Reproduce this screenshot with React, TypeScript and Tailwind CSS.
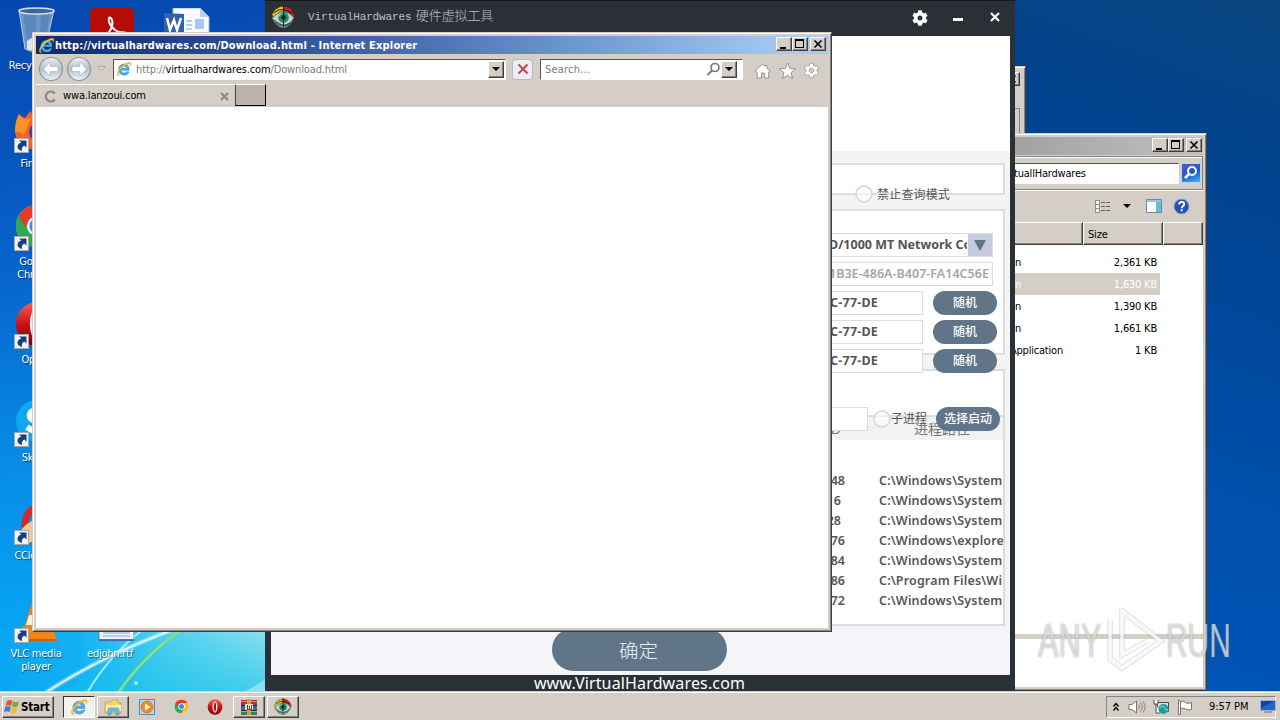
import type { ReactNode } from "react";
import clsx from "clsx";
import { FaCog } from "react-icons/fa";

// Shared classes
const UI_FONT = "font-['DejaVu_Sans_Condensed','DejaVu_Sans','Noto_Sans_CJK_SC',sans-serif] [font-stretch:condensed]";
const APP_FONT = "font-['Noto_Sans','Noto_Sans_CJK_SC',sans-serif]";
const RAISED = "border border-t-white border-l-white border-b-[#404040] border-r-[#404040] bg-[#d4cec6] shadow-[inset_-1px_-1px_0_#87827c]";
const SUNKEN = "border border-t-[#55524e] border-l-[#55524e] border-b-white border-r-white";
const FRAME = "border border-t-[#d4cec6] border-l-[#d4cec6] border-b-[#404040] border-r-[#404040] bg-[#d4cec6] shadow-[inset_1px_1px_0_#fff,inset_-1px_-1px_0_#87827c]";


/* ---------- Icons ---------- */

function IeIcon({ size }: { size: number }) {
    return (
        <svg width={size} height={size} viewBox="0 0 16 16" className="shrink-0">
            <path d="M13.2 9.2H5.2C5.4 11 6.6 12 8.3 12c1.200 0 2-.5 2.500-1.200h2.300C12.300 13 10.500 14.200 8.300 14.200 5 14.200 2.700 11.800 2.700 8.500S5 3 8.200 3s5.200 2.400 5 6.200zM5.300 7.300h5.300C10.400 6 9.500 5.200 8 5.200S5.600 6 5.300 7.300z" fill="#4db1f0" stroke="#1f77c4" strokeWidth=".5" />
            <path d="M2.500 14.800C-.5 14 2 8.500 6 5c4-3.600 8.700-5 9-2.400.1.800-.2 1.700-.7 2.600.2-1.800-.6-2.600-2.500-2C8 4.300 3.500 9 2.600 12c-.4 1.400 0 2.300 1.500 2.100-.500.5-1 .7-1.600.7z" fill="#f5c928" stroke="#cf9712" strokeWidth=".3" />
        </svg>
    );
}

function ChromeIcon({ size }: { size: number }) {
    return (
        <svg width={size} height={size} viewBox="0 0 48 48" className="shrink-0">
            <circle cx="24" cy="24" r="22" fill="#fbc116" />
            <path d="M5 13A22 22 0 0 0 22 46L33 29 24 24z" fill="#2da94f" />
            <path d="M5 13A22 22 0 0 1 43 13H24v11H11z" fill="#e33b2e" />
            <circle cx="24" cy="24" r="10.500" fill="#fff" />
            <circle cx="24" cy="24" r="8" fill="#4286f5" />
        </svg>
    );
}

function OperaIcon({ size }: { size: number }) {
    return (
        <svg width={size} height={size} viewBox="0 0 48 48" className="shrink-0">
            <defs>
                <linearGradient id="opera" x2="0" y2="1">
                    <stop stopColor="#f0635a" />
                    <stop offset=".5" stopColor="#cc1016" />
                    <stop offset="1" stopColor="#7e0007" />
                </linearGradient>
            </defs>
            <ellipse cx="24" cy="24" rx="22" ry="23" fill="url(#opera)" />
            <ellipse cx="24" cy="24" rx="7.500" ry="17" fill="#f5eded" />
            <ellipse cx="24" cy="24" rx="3" ry="14" fill="#a20b10" />
        </svg>
    );
}

function EyeIcon({ size }: { size: number }) {
    return (
        <svg width={size} height={size} viewBox="0 0 26 26" className="shrink-0">
            <path d="M1 10Q4 2 13 1v7Q6 9 2 14z" fill="#e0c02c" stroke="#222" strokeWidth=".6" />
            <path d="M13 1q10 1 12 11l-3 1Q20 8 13 8z" fill="#d02020" stroke="#3c1010" strokeWidth=".6" />
            <path d="M1 14Q7 7 13 7t11 6q-3 10-11 11Q5 23 1 14z" fill="#c8d3d0" stroke="#20302c" strokeWidth=".7" />
            <path d="M2 15q6 5 11 6 7-1 11-7M4 18q5 4 9 4 5 0 8-4" fill="none" stroke="#2e5148" strokeWidth="1.100" />
            <circle cx="13" cy="13" r="5.500" fill="#1f8f6b" />
            <circle cx="13" cy="13" r="2.500" fill="#0c2a25" />
            <path d="M3 8q9-7 20 1M13 1v22" fill="none" stroke="#1f1c12" />
            <path d="M8 12q1-3 4-3" fill="none" stroke="#a6e3cf" />
        </svg>
    );
}

function WinRarIcon() {
    return (
        <svg width="18" height="18" viewBox="0 0 18 18" shapeRendering="crispEdges">
            <path d="M1 2h16v5H1z" fill="#b92c3d" />
            <path d="M1 7h16v5H1z" fill="#3a62b5" />
            <path d="M1 12h16v5H1z" fill="#368645" />
            <path d="M1 3h16M1 13h16" stroke="#d98c88" />
            <path d="M1 7h16M1 12h16" stroke="#2a2940" />
            <path d="M7 1h4v16H7z" fill="#c9a54a" />
            <path d="M5 6h8v6H5z" fill="#e9e4d4" />
            <path d="M7 7v4h4V7M9 8v3" fill="none" stroke="#514320" />
        </svg>
    );
}

function FolderIcon() {
    return (
        <svg width="18" height="18" viewBox="0 0 18 18">
            <path d="M1 4h6l1-2h6v3h3v10H1z" fill="#f2d36c" stroke="#c49b34" strokeWidth=".7" />
            <path d="M2 7h15v6H2z" fill="#fbeeb0" />
            <path d="M4 17v-5q0-2 2-2h7q2 0 2 2v5h-3v-4H7v4z" fill="#6bc0e8" stroke="#3a8bba" strokeWidth=".6" />
        </svg>
    );
}

function MediaIcon() {
    return (
        <svg width="16" height="16" viewBox="0 0 16 16">
            <rect x=".5" y=".5" width="15" height="15" fill="#b7d7ec" stroke="#4a8fbf" />
            <circle cx="8" cy="8" r="6" fill="#f28a1a" stroke="#d26a08" strokeWidth=".6" />
            <path d="M6 4.500v7L11.500 8z" fill="#fff" />
        </svg>
    );
}

function WindowsFlag() {
    return (
        <svg width="16" height="15" viewBox="0 0 16 15" className="shrink-0">
            <path d="M3 2Q6 0 8.500 2L7 7Q4.500 5.300 1.500 7z" fill="#e5532a" />
            <path d="M9.300 2.300Q12 4 15 2.300L13.500 7.500Q10.500 9 8 7.300z" fill="#6dae3a" />
            <path d="M1.200 8Q4 6.500 6.800 8L5.300 13Q3 11.500 0 13z" fill="#3b7cd0" />
            <path d="M7.700 8.300Q10.500 10 13.300 8.500L11.800 13.500Q9 15 6.200 13.500z" fill="#f3bd25" />
        </svg>
    );
}

function ShortcutArrow() {
    return (
        <svg width="15" height="15" viewBox="0 0 15 15" className="absolute bottom-0 left-0">
            <rect x=".5" y=".5" width="14" height="14" fill="#f0f2f6" stroke="#a9a9a0" />
            <path d="M5 2.500h7.500V9.500L10.300 7.500Q7 9 8 13 3 11.500 3.500 8 4 5.500 7.300 4.600z" fill="#173f80" />
        </svg>
    );
}

/* ---------- Classic window buttons ---------- */

function CaptionButtons() {
    return (
        <div className="-mt-0.5 flex items-center">
            <div className={clsx("h-[14px] w-4", RAISED)}>
                <div className="mt-[9px] ml-[3px] h-0.5 w-1.5 bg-black" />
            </div>
            <div className={clsx("h-[14px] w-4 pt-px pl-0.5", RAISED)}>
                <div className="h-[9px] w-[9px] border border-t-2 border-black" />
            </div>
            <div className={clsx("ml-0.5 h-[14px] w-4", RAISED)}>
                <svg width="14" height="12" viewBox="0 0 14 12">
                    <path d="m3.500 2.500 7 7m0-7-7 7" stroke="#000" strokeWidth="1.600" />
                </svg>
            </div>
        </div>
    );
}

function DropButton() {
    return (
        <div className={clsx("flex h-[17px] w-4 items-center justify-center", RAISED)}>
            <div className="border-x-4 border-t-4 border-x-transparent border-t-black" />
        </div>
    );
}

/* ---------- Desktop ---------- */

function Wallpaper() {
    return (
        <>
            <div className="absolute inset-y-0 left-0 w-[640px] bg-[linear-gradient(176deg,#0648ae_0%,#0655bd_20%,#0667cf_38%,#078be5_60%,#07a2f2_80%,#08a8f4_100%)]" />
            <div className="absolute inset-y-0 right-0 w-[270px] bg-[linear-gradient(200deg,#0a467f_0%,#00428c_20%,#00489c_42%,#0050ae_65%,#0056b8_100%)]" />
            <svg width="265" height="65" viewBox="0 0 265 65" className="absolute top-[628px] left-0">
                <defs>
                    <linearGradient id="sky" x1="0" x2="1" y1="0" y2="0">
                        <stop stopColor="#08a5f4" />
                        <stop offset=".3" stopColor="#13b1f3" />
                        <stop offset=".6" stopColor="#4bcff0" />
                        <stop offset="1" stopColor="#8be2ee" />
                    </linearGradient>
                    <linearGradient id="deep" x1="0" x2="0" y1="0" y2="1">
                        <stop stopColor="#08b8ea" stopOpacity="0" />
                        <stop offset="1" stopColor="#12bfe9" stopOpacity=".6" />
                    </linearGradient>
                </defs>
                <path d="M0 0h265v65H0z" fill="url(#sky)" />
                <path d="M60 65Q115 26 178 0h87v65z" fill="url(#deep)" />
                <path d="M45 65Q105 26 178 0" fill="none" stroke="#dff7ff" strokeWidth="5" opacity=".35" />
                <path d="M45 65Q105 26 178 0" fill="none" stroke="#effcff" strokeWidth="2" opacity=".85" />
                <path d="M87 65Q110 26 145 0" fill="none" stroke="#c9f3fd" strokeWidth="2" opacity=".8" />
                <path d="M118 65Q145 26 184 0" fill="none" stroke="#8fe36a" strokeWidth="2.500" />
                <path d="M240 65q12-4 25-14v14z" fill="#b4eef5" opacity=".6" />
                <circle cx="136" cy="55" r="2" fill="#a9eefb" />
            </svg>
        </>
    );
}

function DesktopIcon({ className, label, shortcut, children }: { className: string; label: string; shortcut?: boolean; children: ReactNode }) {
    return (
        <div className={clsx("absolute flex w-[74px] flex-col items-center", className)}>
            <div className="relative h-12 w-[46px]">
                {children}
                {shortcut && <ShortcutArrow />}
            </div>
            <div className="mt-1 -ml-0.5 text-center text-[11px] leading-[13px] whitespace-pre tracking-[-0.25px] text-white [text-shadow:1px_1px_1px_#0008]">{label}</div>
        </div>
    );
}

function DesktopIcons() {
    return (
        <>
            <DesktopIcon className="top-[7px] left-0" label="Recycle Bin">
                <svg width="46" height="48" viewBox="0 0 46 48">
                    <path d="M5 3 11 42q10 5 20 0L40 3z" fill="#8fb0d2" fillOpacity=".75" stroke="#b7cee4" />
                    <path d="M9 6 14 40l8 1V6zm18 0-2 35 6-3 5-32z" fill="#4e7cae" opacity=".55" />
                    <path d="M13 34q8-7 19-2l-2 9q-9 5-17 1z" fill="#e1e5e8" />
                    <ellipse cx="22.500" cy="4" rx="17.500" ry="3" fill="#3a689e" stroke="#d3e0ec" strokeWidth="1.500" />
                </svg>
            </DesktopIcon>
            <DesktopIcon className="top-[8px] left-[76px]" label="">
                <svg width="46" height="48" viewBox="0 0 46 48">
                    <rect width="44" height="44" rx="5" fill="#b50c05" />
                    <path d="M14 30q12-12 7-20-3-2-2 4 4 11 18 11-10-3-23 5" fill="none" stroke="#fff" strokeWidth="2" />
                </svg>
            </DesktopIcon>
            <DesktopIcon className="top-[8px] left-[150px]" label="">
                <svg width="46" height="48" viewBox="0 0 46 48">
                    <path d="M9 0h27l9 9v39H9z" fill="#f8fbff" stroke="#9ab5d6" />
                    <path d="M36 0v9h9z" fill="#bcd0ea" />
                    <path d="M22 13h6m-6 4h6m-6 4h6" stroke="#7ca2d8" />
                    <path d="M31 11h9v10h-9z" fill="#a9c8ee" />
                    <path d="M0 5 20 6v20L0 25z" fill="#3360ae" />
                    <path d="m3 10 3 12 4-10 3 10 4-12" fill="none" stroke="#fff" strokeWidth="2.500" />
                </svg>
            </DesktopIcon>
            <DesktopIcon className="top-[105px] left-0" label="Firefox" shortcut>
                <svg width="46" height="48" viewBox="0 0 46 48">
                    <path d="M5 9q4 4 6 4 2-4 6-7l2 7 18 7q4 19-17 24Q4 45 1 27 1 17 5 9z" fill="#f7602a" />
                    <path d="M5 9q4 7 12 4L10 30Q4 26 1 27 1 16 5 9z" fill="#fb9224" />
                    <circle cx="25" cy="27" r="10" fill="#4c3bb0" />
                </svg>
            </DesktopIcon>
            <DesktopIcon className="top-[203px] left-0" label={"Google\nChrome"} shortcut>
                <ChromeIcon size={46} />
            </DesktopIcon>
            <DesktopIcon className="top-[301px] left-0" label="Opera" shortcut>
                <OperaIcon size={46} />
            </DesktopIcon>
            <DesktopIcon className="top-[399px] left-0" label="Skype" shortcut>
                <svg width="46" height="48" viewBox="0 0 46 48">
                    <circle cx="23" cy="22" r="21" fill="#12a6ee" />
                    <path d="M32 15q-8-7-15-2-4 6 4 9 12 2 9 8-6 6-17-2" fill="none" stroke="#fff" strokeWidth="6" />
                </svg>
            </DesktopIcon>
            <DesktopIcon className="top-[497px] left-0" label="CCleaner" shortcut>
                <svg width="46" height="48" viewBox="0 0 46 48">
                    <path d="M34 8Q12 9 11 27q2 17 20 17" fill="none" stroke="#cc2e26" strokeWidth="7" />
                    <path d="M3 44Q6 28 22 22l7 12q-6 9-14 12z" fill="#ecc79a" />
                </svg>
            </DesktopIcon>
            <DesktopIcon className="top-[595px] left-0" label={"VLC media\nplayer"} shortcut>
                <svg width="46" height="48" viewBox="0 0 46 48">
                    <path d="M20 2h6l10 30H10z" fill="#ee7d18" />
                    <path d="m15 20-3 10h22l-3-10z" fill="#f2efea" />
                    <path d="M9 31h29l5 15H4z" fill="#f28518" />
                    <path d="M4 44h39v2H4z" fill="#cd5f08" />
                </svg>
            </DesktopIcon>
            <DesktopIcon className="top-[595px] left-[74px]" label="edjohn.rtf">
                <svg width="46" height="48" viewBox="0 0 46 48">
                    <path d="M12 0h35v45H12z" fill="#eef4fd" stroke="#5f83bd" transform="translate(-1)" />
                    <path d="M11 45h35" stroke="#345e9f" strokeWidth="1.500" />
                    <path d="M15 38h27M15 41h27" stroke="#7da3dc" />
                </svg>
            </DesktopIcon>
        </>
    );
}

/* ---------- Explorer window ---------- */

const files = [
    { type: "n", size: "2,361 KB" },
    { type: "n", size: "1,630 KB", selected: true },
    { type: "n", size: "1,390 KB" },
    { type: "n", size: "1,661 KB" },
    { type: "Application", size: "1 KB" },
];

function ExplorerWindow() {
    return (
        <div className={clsx("absolute top-[133px] left-[900px] flex h-[558px] w-[307px] flex-col p-[3px]", FRAME)}>
            {/* Title bar */}
            <div className="flex h-[18px] shrink-0 items-center justify-end bg-[linear-gradient(90deg,#909090,#c0c0c0)] pr-px">
                <CaptionButtons />
            </div>

            {/* Address bar */}
            <div className="mt-px flex h-[34px] shrink-0 items-center border border-[#87827c] pr-px shadow-[0_1px_0_#fff,inset_0_1px_0_#fff]">
                <div className={clsx("flex h-[21px] flex-1 items-center bg-white pt-0.5 pl-[108px] text-[11px] tracking-[-0.2px]", SUNKEN)}>tuallHardwares</div>
                <div className="ml-0.5 flex h-5 w-5 items-center justify-center border border-[#b9d8f0] bg-[linear-gradient(160deg,#5a58d0,#2356d4_50%,#38b6e6)]">
                    <svg width="18" height="18" viewBox="0 0 18 18">
                        <circle cx="10" cy="7" r="4" fill="none" stroke="#fff" strokeWidth="2" />
                        <path d="m7 10-4 4" stroke="#fff" strokeWidth="2.500" />
                    </svg>
                </div>
            </div>

            {/* Toolbar */}
            <div className="flex h-8 shrink-0 items-center justify-end pr-[13px]">
                <svg width="17" height="14" viewBox="0 0 17 14" shapeRendering="crispEdges">
                    <path d="M1 1h4v12H1zM1 5h4M1 9h4" fill="#f4f2ee" stroke="#918d88" />
                    <path d="M7 3h4m1 0h4M7 7h4m1 0h4M7 11h4m1 0h4" stroke="#66625f" />
                </svg>
                <div className="mr-[15px] ml-3 border-x-4 border-t-4 border-x-transparent border-t-black" />
                <svg width="16" height="14" viewBox="0 0 16 14">
                    <path d="M.5.5h15v13H.5z" fill="#fff" stroke="#5e8db0" />
                    <path d="M1 1h14v2H1z" fill="#9cc5dc" />
                    <path d="M10 3h5v10h-5z" fill="#62c3cd" />
                </svg>
                <svg width="17" height="17" viewBox="0 0 17 17" className="ml-[11px]">
                    <circle cx="8.500" cy="8.500" r="7.500" fill="#2851b8" stroke="#8ea9d6" />
                    <path d="M6 6.500Q6.200 4 8.700 4t2.500 2.300C11 8 8.700 8 8.700 10.200M8.700 11.300v2" fill="none" stroke="#fff" strokeWidth="1.800" />
                </svg>
            </div>

            {/* Column headers */}
            <div className="flex h-[23px] shrink-0 text-[11px] leading-[23px]">
                <div className={clsx("flex-1", RAISED)} />
                <div className={clsx("w-20 pl-1 tracking-[-0.2px]", RAISED)}>Size</div>
                <div className={clsx("w-10", RAISED)} />
            </div>

            {/* File list */}
            <div className="flex-1 bg-white pt-1.5 text-[11px] tracking-[-0.2px]">
                {files.map((file, i) => (
                    <div key={i} className={clsx("mr-[43px] flex h-[22px] items-center pt-0.5 pr-[3px]", file.selected && "bg-[#d4cec6] text-white")}>
                        <span className={clsx("text-right whitespace-nowrap", file.type === "n" ? "w-[117px]" : "w-[159px]")}>{file.type}</span>
                        <span className="flex-1 text-right">{file.size}</span>
                    </div>
                ))}
            </div>
            <div className="h-[5px] shrink-0 bg-[#d4cec6]" />
            <div className="h-[48px] shrink-0 bg-white" />
        </div>
    );
}

/* ---------- VirtualHardwares window ---------- */

const processes = [
    { pid: "48", path: "C:\\Windows\\System32" },
    { pid: "6", path: "C:\\Windows\\System32" },
    { pid: "28", path: "C:\\Windows\\System32" },
    { pid: "76", path: "C:\\Windows\\explorer" },
    { pid: "84", path: "C:\\Windows\\System32" },
    { pid: "86", path: "C:\\Program Files\\Wi" },
    { pid: "72", path: "C:\\Windows\\System32" },
];

function PillButton({ children }: { children: ReactNode }) {
    return (
        <div className="flex h-6 w-16 shrink-0 items-center justify-center rounded-full bg-[#607587] text-[12px] font-medium text-white">{children}</div>
    );
}

function Radio() {
    return <div className="h-[18px] w-[18px] shrink-0 rounded-full border-2 border-[#dcdcdc] bg-white/60" />;
}

function HardwareWindow() {
    return (
        <div className={clsx("absolute isolate top-0 left-[265px] flex h-[692px] w-[750px] flex-col bg-[#283136] text-[#555]", APP_FONT)}>
            {/* Title bar */}
            <div className="flex h-9 shrink-0 items-center border-t border-[#14171b] bg-[#2b2f36] pr-[15px] pb-[3px] pl-1.5">
                <EyeIcon size={25} />
                <div className="ml-3 flex-1 font-['Liberation_Mono','Noto_Sans_CJK_SC',monospace] text-[11px] tracking-[-0.14px] text-[#b5c3cd]">
                    VirtualHardwares <span className="-ml-0.5 text-[13px] font-light tracking-[-0.1px]">硬件虚拟工具</span>
                </div>
                <FaCog className="mt-px h-4 w-4 text-white" />
                <div className="mt-1 ml-[25px] h-[3px] w-2.5 bg-white" />
                <svg width="10" height="10" viewBox="0 0 10 10" className="ml-[27px]">
                    <path d="m1 1 8 8m0-8-8 8" stroke="#fff" strokeWidth="2.200" />
                </svg>
            </div>

            <div className="mr-[5px] ml-1.5 flex h-[639px] shrink-0 flex-col bg-[#f4f4f4]">
                <div className="h-[115px] shrink-0 bg-white" />

                <div className="mt-3 mr-[5px] ml-2.5 flex flex-col">
                    {/* Query mode */}
                    <div className="flex h-8 justify-end border-2 border-[#dcdcdc] bg-white pr-[53px]">
                        <div className="relative top-5 flex h-[18px] items-center gap-1 text-[12px]">
                            <Radio />
                            <span className="pt-0.5 tracking-[0.15px] whitespace-nowrap">禁止查询模式</span>
                        </div>
                    </div>

                    {/* Network adapter */}
                    <div className="relative z-10 mt-3.5 flex h-[146px] flex-col items-end gap-[5px] border-2 border-[#dcdcdc] bg-white pt-[22px] text-[12.500px] font-bold">
                        <div className="mr-2.5 flex h-6 w-[165px] shrink-0 border border-[#dcdcdc]">
                            <div className="mr-px flex flex-1 items-center overflow-hidden whitespace-nowrap">
                                <span>D/1000 MT Network Co</span>
                            </div>
                            <div className="flex w-6 shrink-0 items-center justify-center bg-[#c5cbdc]">
                                <div className="border-x-[6px] border-t-[11px] border-x-transparent border-t-[#5f7488]" />
                            </div>
                        </div>
                        <div className="mr-2.5 flex h-6 w-[165px] shrink-0 items-center border border-[#dcdcdc] pr-[3px] font-semibold text-[#a5a5a5]">
                            <span className="overflow-hidden tracking-[0.02px] whitespace-nowrap">1B3E-486A-B407-FA14C56E</span>
                        </div>
                        {[0, 1, 2].map((row) => (
                            <div key={row} className="mr-1.5 flex shrink-0 gap-2.5">
                                <div className="flex h-6 w-[430px] items-center justify-end border border-[#dcdcdc] bg-white pr-11 tracking-[0.2px]">C-77-DE</div>
                                <PillButton>随机</PillButton>
                            </div>
                        ))}
                    </div>

                    {/* Process launcher */}
                    <div className="mt-3.5 h-[46px] border-2 border-b-0 border-[#dcdcdc] bg-white" />
                    <div className="h-[211px] border-2 border-[#dcdcdc] bg-white text-[12.500px] font-semibold">
                        <div className="flex h-[23px] bg-[#f2f2f2] text-[14px] leading-[24px] font-normal text-[#777]">
                            <span className="w-[558px] text-right">ID</span>
                            <span className="ml-[73px]">进程路径</span>
                        </div>
                        <div className="relative -mt-[33px] mr-[3px] flex h-6 items-center justify-end">
                            <div className="h-6 w-[380px] border border-[#dcdcdc] bg-white" />
                            <div className="ml-[5px] flex items-center text-[12px] font-normal">
                                <Radio />
                                <span className="mr-[9px] w-9 whitespace-nowrap">子进程</span>
                            </div>
                            <PillButton>选择启动</PillButton>
                        </div>
                        <div className="mt-10 overflow-hidden">
                            {processes.map((proc, i) => (
                                <div key={i} className="flex h-5 items-center overflow-hidden whitespace-nowrap">
                                    <span className={clsx("w-[562px] shrink-0 text-right", i > 0 && i < 3 && "pr-1")}>{proc.pid}</span>
                                    <span className="ml-[34px] w-[124px] shrink-0 overflow-hidden tracking-[0.15px]">{proc.path}</span>
                                </div>
                            ))}
                        </div>
                    </div>
                </div>

                {/* Confirm button */}
                <div className="flex flex-1 items-end justify-center bg-[#f4f4f9] pb-1">
                    <div className="relative flex h-[43px] w-[175px] -translate-x-px items-center justify-center rounded-full bg-[#607587] pt-0.5 pr-0.5 text-[19.500px] font-light text-[#e9f1f7]">确定</div>
                </div>
            </div>
            <div className="pr-px text-center text-[16px] leading-[16px] tracking-[0.15px] text-white">www.VirtualHardwares.com</div>
        </div>
    );
}

/* ---------- Internet Explorer window ---------- */

function NavButton({ back }: { back?: boolean }) {
    return (
        <svg width="28" height="26" viewBox="0 0 28 26">
            <defs>
                <linearGradient id="nav" x2="0" y2="1">
                    <stop stopColor="#eef1f4" />
                    <stop offset=".5" stopColor="#b3c0cb" />
                    <stop offset="1" stopColor="#e8f6fd" />
                </linearGradient>
            </defs>
            <circle cx="14" cy="13" r="11.500" fill="url(#nav)" stroke="#8e949a" strokeWidth="1.200" />
            <path d="M6.500 13 13 6v4.500h8v5h-8V20z" fill="#fff" stroke="#98a8b5" strokeWidth=".5" transform={back ? undefined : "matrix(-1 0 0 1 28 0)"} />
        </svg>
    );
}

function BrowserWindow() {
    return (
        <div className={clsx("absolute top-[32px] left-[32px] flex h-[600px] w-[800px] flex-col p-[3px] text-[11px]", FRAME)}>
            {/* Title bar */}
            <div className="flex h-[18px] shrink-0 items-center bg-[linear-gradient(90deg,#0d2a70,#3d5fa5_40%,#6c97d0_68%,#a6caf0_95%)] pr-0.5 pl-0.5">
                <IeIcon size={17} />
                <div className="flex-1 pt-0.5 text-[11px] font-bold tracking-[0.17px] text-white">http://virtualhardwares.com/Download.html - Internet Explorer</div>
                <CaptionButtons />
            </div>

            {/* Navigation bar */}
            <div className="flex h-[30px] shrink-0 items-center pl-px">
                <NavButton back />
                <NavButton />
                <svg width="9" height="6" viewBox="0 0 9 6" className="mr-[7px] ml-[4px]">
                    <path d="M.5.500h8l-4 4z" fill="#dedad4" stroke="#a7a19a" strokeWidth=".8" />
                </svg>
                <div className={clsx("flex h-[21px] w-[393px] items-center bg-white pr-px pl-0.5", SUNKEN)}>
                    <IeIcon size={16} />
                    <div className="ml-1 flex-1 pt-0.5 tracking-[-0.13px] text-[#7b7b7b]">
                        http://<span className="text-black">virtualhardwares.com</span>/Download.html
                    </div>
                    <DropButton />
                </div>
                <div className="ml-1.5 flex h-[21px] w-[21px] items-center justify-center rounded-sm border border-[#b4bac6] bg-[#eceef4]">
                    <svg width="12" height="12" viewBox="0 0 12 12">
                        <path d="m1.500 1.500 9 9m0-9-9 9" stroke="#c2474d" strokeWidth="2" />
                    </svg>
                </div>
                <div className={clsx("ml-[7px] flex h-[21px] w-[203px] items-center bg-white pr-[5px] pl-1", SUNKEN)}>
                    <span className="flex-1 pt-0.5 tracking-[0.2px] text-[#7b7b7b]">Search...</span>
                    <svg width="15" height="14" viewBox="0 0 15 14">
                        <circle cx="9" cy="5.500" r="4" fill="none" stroke="#777" strokeWidth="1.600" />
                        <path d="m6 8.500-4.500 4.500" stroke="#777" strokeWidth="2" />
                    </svg>
                    <DropButton />
                </div>
                <svg width="44" height="18" viewBox="0 0 44 18" className="mt-1 ml-[11px]" fill="#fff" stroke="#8f8a84" strokeWidth=".9">
                    <path d="m1 9 7.500-7 2.300 2.300V3.500h2.200V6.500L16 9.200l-1.300 1V16h-4v-5H7.500v5H3.200v-5.700z" />
                    <path d="m33.500 1 2.200 5.400 5.800.4-4.400 3.800 1.400 5.900-5-3.200-5 3.200 1.400-5.900-4.400-3.800 5.800-.4z" />
                </svg>
                <FaCog className="mt-0.5 ml-1.5 h-[15px] w-[15px] overflow-visible text-white" stroke="#8f8a84" strokeWidth="26" />
            </div>

            {/* Tabs */}
            <div className="flex h-[23px] shrink-0 items-start">
                <div className="flex h-[23px] w-[199px] items-center border-t border-white pr-1.5 pl-2">
                    <svg width="13" height="13" viewBox="0 0 13 13">
                        <path d="M10.800 3.500A5 5 0 1 0 10.800 9.500" fill="none" stroke="#8c8782" strokeWidth="2.200" />
                    </svg>
                    <span className="ml-1.5 flex-1 pt-px tracking-[-0.15px] text-black">wwa.lanzoui.com</span>
                    <svg width="9" height="9" viewBox="0 0 9 9">
                        <path d="m1 1 7 7m0-7-7 7" stroke="#8c8782" strokeWidth="2" />
                    </svg>
                </div>
                <div className="h-[22px] w-[31px] border border-t-white border-r-black border-b-black border-l-[#444] bg-[#bab2ab]" />
            </div>

            {/* Blank page */}
            <div className="flex-1 bg-white" />
        </div>
    );
}

/* ---------- Watermark ---------- */

function Watermark() {
    return (
        <div className="absolute top-[608px] left-[1038px] flex h-16 w-[200px] items-center font-['Liberation_Sans',sans-serif] text-[49px] leading-none text-white/60 [text-shadow:0_0_2px_#777b]">
            <span className="w-[67px] origin-left scale-x-[0.63]">ANY</span>
            <svg width="60" height="64" viewBox="0 0 60 64" fill="none">
                <path d="M5 11v40l12 9 39-27L17 3v44l25-14" stroke="#9a9a9a" strokeWidth="6" opacity=".25" />
                <path d="M5 11v40l12 9 39-27L17 3v44l25-14" stroke="#fff" strokeWidth="3.500" opacity=".75" />
            </svg>
            <span className="ml-px w-[68px] origin-left scale-x-[0.61]">RUN</span>
        </div>
    );
}

/* ---------- Taskbar ---------- */

function Taskbar() {
    return (
        <div className="absolute bottom-0 left-0 flex h-[28px] w-full items-center border-t border-white bg-[#d4cec6] pr-1 pl-0.5 text-[11px] shadow-[0_-1px_0_#d4cec6]">
            <div className={clsx("flex h-[22px] w-[52px] items-center gap-px pl-px text-[11.500px] font-bold tracking-[-0.2px]", RAISED)}>
                <WindowsFlag />
                <span className="pt-0.5">Start</span>
            </div>
            <div className="ml-[9px] flex h-[22px] w-8 items-center justify-center border border-t-[#333] border-l-[#333] border-b-white border-r-white bg-[#f3f1ee]">
                <IeIcon size={18} />
            </div>
            <div className={clsx("ml-0.5 flex h-[22px] w-8 items-center justify-center", RAISED)}>
                <FolderIcon />
            </div>
            <div className="flex w-[104px] items-center justify-between px-[10px]">
                <MediaIcon />
                <ChromeIcon size={15} />
                <OperaIcon size={16} />
            </div>
            <div className={clsx("flex h-[22px] w-8 items-center justify-center", RAISED)}>
                <WinRarIcon />
            </div>
            <div className={clsx("ml-0.5 flex h-[22px] w-8 items-center justify-center", RAISED)}>
                <EyeIcon size={18} />
            </div>

            {/* Notification area */}
            <div className="ml-auto flex h-[22px] w-[170px] items-center border border-t-[#87827c] border-l-[#87827c] border-r-white border-b-white pl-[5px]">
                <svg width="8" height="10" viewBox="0 0 8 10" fill="none" stroke="#000" strokeWidth="1.400">
                    <path d="m1.500 4.500 2.500-3 2.500 3m-5 4 2.500-3 2.500 3" />
                </svg>
                <svg width="18" height="16" viewBox="0 0 18 16" className="ml-2" stroke="#77736e">
                    <path d="M1 5.500h3L8.500 2v12L4 10.500H1z" fill="#fff" />
                    <path d="M10.500 5.500q2 2.500 0 5m2-7q3.500 4.500 0 9m2.500-10q4 5.500 0 11" fill="none" strokeWidth=".8" />
                </svg>
                <svg width="16" height="16" viewBox="0 0 16 16" className="ml-[7px]">
                    <path d="M4.500 3.500h11v9h-11z" fill="#cfe6ef" stroke="#3d4c54" />
                    <path d="M1 1v4h4V1M3 5v9h4" fill="#fff" stroke="#4c4c4c" />
                    <circle cx="10.500" cy="10" r="5" fill="#249c9b" />
                    <path d="M7 9q3-4 5 0t3 1" fill="none" stroke="#a8ded5" />
                </svg>
                <svg width="17" height="16" viewBox="0 0 17 16" className="ml-2" fill="#fff" stroke="#77736e">
                    <path d="M1.500 1v14.500h2V2zM3.500 2.500q3-1 5 1t6 0v7q-3 1-6-.5t-5-.5z" />
                </svg>
                <span className="ml-[15px] flex-1 pt-0.5 tracking-[-0.05px] whitespace-nowrap text-black">9:57 PM</span>
                <svg width="16" height="13" viewBox="0 0 16 13" className="-mr-px">
                    <path d="M.5.500h15v10H.500z" fill="#2464c9" stroke="#9ab4d8" />
                    <path d="M1 1h14L1 8z" fill="#16459e" />
                    <path d="M4 12h8" stroke="#5e6670" />
                </svg>
            </div>
        </div>
    );
}

export default function App() {
    return (
        <div className={clsx("relative h-[720px] w-[1280px] overflow-hidden bg-[#0055b5] text-black", UI_FONT)}>
            <Wallpaper />
            <DesktopIcons />

            {/* Edge of a window lying behind the others */}
            <div className={clsx("absolute top-[66px] left-[900px] flex h-[100px] w-[126px] flex-col items-end pt-[7px] pr-[5px]", FRAME)}>
                <CaptionButtons />
                <div className="mt-[22px] h-12 w-[100px] border border-[#87827c]" />
            </div>

            <ExplorerWindow />
            <HardwareWindow />
            <BrowserWindow />
            <Watermark />
            <Taskbar />
        </div>
    );
}
